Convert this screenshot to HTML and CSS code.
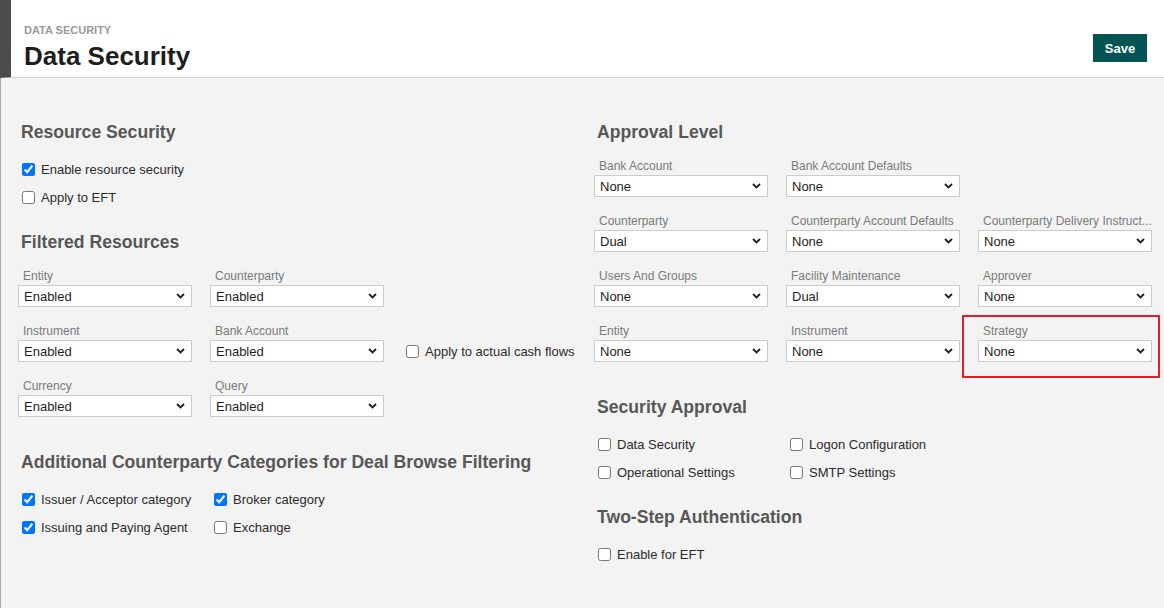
FILE: index.html
```html
<!DOCTYPE html>
<html lang="en">
<head>
<meta charset="utf-8">
<title>Data Security</title>
<link rel="stylesheet" href="styles.css">
</head>
<body>
<header class="page-header">
  <div class="titles">
    <div class="crumb">DATA SECURITY</div>
    <h1 class="title">Data Security</h1>
  </div>
  <button class="btn-save" type="button">Save</button>
</header>
<main class="content">
  <div class="panel panel-left">
    <section>
      <h2 class="sec-title">Resource Security</h2>
      <div class="checks stack">
        <label class="check"><input type="checkbox" checked><span>Enable resource security</span></label>
        <label class="check"><input type="checkbox"><span>Apply to EFT</span></label>
      </div>
    </section>
    <section>
      <h2 class="sec-title">Filtered Resources</h2>
      <div class="fields">
        <div class="field"><div class="field-label">Entity</div><div class="select"><select><option>Enabled</option></select><svg class="chev" viewBox="0 0 9 6" width="9" height="6"><path d="M1 1L4.5 4.5L8 1"/></svg></div></div>
        <div class="field"><div class="field-label">Counterparty</div><div class="select"><select><option>Enabled</option></select><svg class="chev" viewBox="0 0 9 6" width="9" height="6"><path d="M1 1L4.5 4.5L8 1"/></svg></div></div>
        <div class="field empty"></div>
        <div class="field"><div class="field-label">Instrument</div><div class="select"><select><option>Enabled</option></select><svg class="chev" viewBox="0 0 9 6" width="9" height="6"><path d="M1 1L4.5 4.5L8 1"/></svg></div></div>
        <div class="field"><div class="field-label">Bank Account</div><div class="select"><select><option>Enabled</option></select><svg class="chev" viewBox="0 0 9 6" width="9" height="6"><path d="M1 1L4.5 4.5L8 1"/></svg></div></div>
        <label class="check inline-check"><input type="checkbox"><span>Apply to actual cash flows</span></label>
        <div class="field"><div class="field-label">Currency</div><div class="select"><select><option>Enabled</option></select><svg class="chev" viewBox="0 0 9 6" width="9" height="6"><path d="M1 1L4.5 4.5L8 1"/></svg></div></div>
        <div class="field"><div class="field-label">Query</div><div class="select"><select><option>Enabled</option></select><svg class="chev" viewBox="0 0 9 6" width="9" height="6"><path d="M1 1L4.5 4.5L8 1"/></svg></div></div>
      </div>
    </section>
    <section>
      <h2 class="sec-title">Additional Counterparty Categories for Deal Browse Filtering</h2>
      <div class="checks">
        <label class="check"><input type="checkbox" checked><span>Issuer / Acceptor category</span></label>
        <label class="check"><input type="checkbox" checked><span>Broker category</span></label>
        <label class="check"><input type="checkbox" checked><span>Issuing and Paying Agent</span></label>
        <label class="check"><input type="checkbox"><span>Exchange</span></label>
      </div>
    </section>
  </div>

  <div class="panel panel-right">
    <section>
      <h2 class="sec-title">Approval Level</h2>
      <div class="fields">
        <div class="field"><div class="field-label">Bank Account</div><div class="select"><select><option>None</option></select><svg class="chev" viewBox="0 0 9 6" width="9" height="6"><path d="M1 1L4.5 4.5L8 1"/></svg></div></div>
        <div class="field"><div class="field-label">Bank Account Defaults</div><div class="select"><select><option>None</option></select><svg class="chev" viewBox="0 0 9 6" width="9" height="6"><path d="M1 1L4.5 4.5L8 1"/></svg></div></div>
        <div class="field empty"></div>
        <div class="field"><div class="field-label">Counterparty</div><div class="select"><select><option>Dual</option></select><svg class="chev" viewBox="0 0 9 6" width="9" height="6"><path d="M1 1L4.5 4.5L8 1"/></svg></div></div>
        <div class="field"><div class="field-label">Counterparty Account Defaults</div><div class="select"><select><option>None</option></select><svg class="chev" viewBox="0 0 9 6" width="9" height="6"><path d="M1 1L4.5 4.5L8 1"/></svg></div></div>
        <div class="field"><div class="field-label wide">Counterparty Delivery Instruct...</div><div class="select"><select><option>None</option></select><svg class="chev" viewBox="0 0 9 6" width="9" height="6"><path d="M1 1L4.5 4.5L8 1"/></svg></div></div>
        <div class="field"><div class="field-label">Users And Groups</div><div class="select"><select><option>None</option></select><svg class="chev" viewBox="0 0 9 6" width="9" height="6"><path d="M1 1L4.5 4.5L8 1"/></svg></div></div>
        <div class="field"><div class="field-label">Facility Maintenance</div><div class="select"><select><option>Dual</option></select><svg class="chev" viewBox="0 0 9 6" width="9" height="6"><path d="M1 1L4.5 4.5L8 1"/></svg></div></div>
        <div class="field"><div class="field-label">Approver</div><div class="select"><select><option>None</option></select><svg class="chev" viewBox="0 0 9 6" width="9" height="6"><path d="M1 1L4.5 4.5L8 1"/></svg></div></div>
        <div class="field"><div class="field-label">Entity</div><div class="select"><select><option>None</option></select><svg class="chev" viewBox="0 0 9 6" width="9" height="6"><path d="M1 1L4.5 4.5L8 1"/></svg></div></div>
        <div class="field"><div class="field-label">Instrument</div><div class="select"><select><option>None</option></select><svg class="chev" viewBox="0 0 9 6" width="9" height="6"><path d="M1 1L4.5 4.5L8 1"/></svg></div></div>
        <div class="field highlighted"><div class="field-label">Strategy</div><div class="select"><select><option>None</option></select><svg class="chev" viewBox="0 0 9 6" width="9" height="6"><path d="M1 1L4.5 4.5L8 1"/></svg></div><span class="highlight-box"></span></div>
      </div>
    </section>
    <section>
      <h2 class="sec-title">Security Approval</h2>
      <div class="checks">
        <label class="check"><input type="checkbox"><span>Data Security</span></label>
        <label class="check"><input type="checkbox"><span>Logon Configuration</span></label>
        <label class="check"><input type="checkbox"><span>Operational Settings</span></label>
        <label class="check"><input type="checkbox"><span>SMTP Settings</span></label>
      </div>
    </section>
    <section>
      <h2 class="sec-title">Two-Step Authentication</h2>
      <div class="checks stack">
        <label class="check"><input type="checkbox"><span>Enable for EFT</span></label>
      </div>
    </section>
  </div>
</main>
</body>
</html>
```

FILE: styles.css
```css
* { box-sizing: border-box; }

html, body {
  margin: 0;
  padding: 0;
  height: 100%;
}

body {
  font-family: "Liberation Sans", Arial, sans-serif;
  color: #222;
  background: #f3f3f3;
  display: flex;
  flex-direction: column;
}

.page-header {
  background: #fff;
  border-left: 11px solid #4b4b4b;
  border-bottom: 1px solid #cfcfcf;
  height: 78px;
  padding: 24px 17px 0 13px;
  display: flex;
  justify-content: space-between;
  align-items: flex-start;
}

.crumb {
  font-size: 11px;
  line-height: 13px;
  font-weight: bold;
  color: #9a9a9a;
}

.title {
  margin: 4px 0 0;
  font-size: 26px;
  line-height: 30px;
  font-weight: bold;
  color: #1e1e1e;
}

.btn-save {
  margin-top: 10px;
  height: 28px;
  width: 54px;
  padding: 0;
  border: none;
  background: #045454;
  color: #fff;
  font-family: "Liberation Sans", Arial, sans-serif;
  font-size: 13px;
  font-weight: bold;
}

.content {
  flex: 1;
  border-left: 1px solid #a8a8a8;
  padding: 43px 0 0 17px;
  display: flex;
  gap: 18px;
  align-items: flex-start;
}

.panel-left { width: 558px; }
.panel-right { width: 558px; }

.sec-title {
  margin: 0 0 16px 3px;
  font-size: 17.6px;
  line-height: 22px;
  font-weight: bold;
  color: #575757;
  white-space: nowrap;
}

.checks {
  display: grid;
  grid-template-columns: repeat(2, 174px);
  column-gap: 18px;
  row-gap: 6px;
  margin-top: -1px;
  margin-bottom: 23px;
}

.checks.stack { grid-template-columns: 300px; }

.check {
  display: flex;
  align-items: center;
  height: 22px;
  padding-left: 4px;
  font-size: 13px;
  color: #2b2b2b;
  white-space: nowrap;
}

.check input {
  margin: 0 6px 0 0;
  width: 13px;
  height: 13px;
  flex: none;
}

.inline-check { align-self: end; }

.fields {
  display: grid;
  grid-template-columns: repeat(3, 174px);
  column-gap: 18px;
  row-gap: 17px;
  margin-bottom: 34px;
}

.field { min-width: 0; }

.field-label {
  font-size: 12px;
  line-height: 14px;
  margin-bottom: 2px;
  padding-left: 5px;
  color: #7a7a7a;
  white-space: nowrap;
}

.field-label.wide { margin-right: -8px; }

.select { position: relative; }

.select select {
  -webkit-appearance: none;
  appearance: none;
  display: block;
  width: 100%;
  height: 22px;
  margin: 0;
  padding: 0 20px 0 5px;
  border: 1px solid #cccccc;
  border-radius: 0;
  background: #fff;
  font-family: "Liberation Sans", Arial, sans-serif;
  font-size: 13px;
  color: #1e1e1e;
}

.chev {
  position: absolute;
  right: 7px;
  top: 8px;
  fill: none;
  stroke: #222;
  stroke-width: 1.9;
  pointer-events: none;
}

.highlighted { position: relative; }

.highlight-box {
  position: absolute;
  left: -16px;
  top: -9px;
  right: -8px;
  bottom: -16px;
  border: 2px solid #e01f28;
  pointer-events: none;
}
```
